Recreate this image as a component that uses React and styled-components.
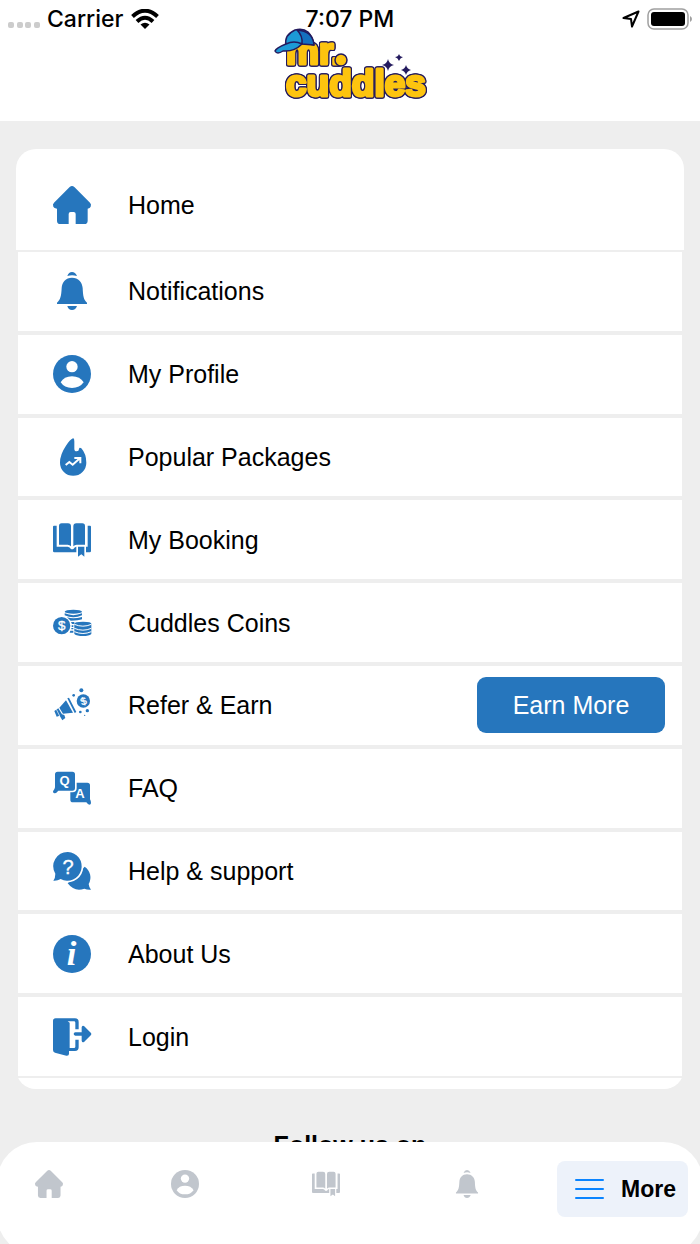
import React from 'react';
import styled, { createGlobalStyle } from 'styled-components';

const BLUE = '#2676bd';
const GREY = '#eeeeee';

const GlobalStyle = createGlobalStyle`
  * {
    box-sizing: border-box;
  }

  body {
    margin: 0;
    background: ${GREY};
    color: #000;
    font-family: 'Liberation Sans', Arial, sans-serif;
    font-size: 25px;
    line-height: 28px;
  }
`;

const Page = styled.div`
  min-height: 100vh;
`;

const Header = styled.header`
  background: white;
  padding-bottom: 19px;
`;

const StatusBar = styled.div`
  display: grid;
  grid-template-columns: 1fr auto 1fr;
  align-items: center;
  padding: 10px 8px 0;
  font-family: Inter, sans-serif;
  font-size: 23px;
  font-weight: 500;
  line-height: 18px;
`;

const StatusGroup = styled.div`
  display: flex;
  align-items: center;
  justify-content: ${props => (props.$end ? 'flex-end' : 'flex-start')};
  gap: 7px;
  height: 18px;
`;

const LogoLink = styled.a`
  display: block;
  width: 152px;
  height: 74px;
  margin: 0 auto;

  svg {
    display: block;
    overflow: visible;
  }
`;

const LogoText = styled.text`
  font-family: 'Liberation Sans', Arial, sans-serif;
  font-weight: bold;
  fill: #fdc40f;
  stroke: #fdc40f;
  stroke-width: 3px;
  stroke-linejoin: round;
  filter: drop-shadow(1px 0 0 #231a5e) drop-shadow(-1px 0 0 #231a5e) drop-shadow(0 1px 0 #231a5e)
    drop-shadow(0 -1px 0 #231a5e);
`;

const Content = styled.main`
  padding: 28px 16px 0;
`;

const Card = styled.nav`
  background: white;
  border-radius: 20px;
  padding: 11px 0;
`;

const HomeRow = styled.div`
  display: flex;
  height: 90px;
  padding: 0 2px;
`;

const MenuList = styled.ul`
  display: grid;
  grid-auto-rows: 1fr;
  min-height: 828px;
  margin: 0;
  padding: 0;
  list-style: none;
`;

const MenuRow = styled.li`
  display: flex;
  align-items: center;
  border: 2px solid ${GREY};
`;

const MenuLink = styled.a`
  flex: 1;
  align-self: stretch;
  display: flex;
  align-items: center;
  gap: 37px;
  padding-left: 35px;
  color: inherit;
  text-decoration: none;
`;

const EarnButton = styled.button`
  width: 188px;
  height: 56px;
  margin-right: 17px;
  border: 0;
  border-radius: 9px;
  background: ${BLUE};
  color: white;
  font: inherit;
  cursor: pointer;
`;

const FollowTitle = styled.h2`
  margin: 42px 0 0;
  font-size: 25px;
  line-height: 28px;
  font-weight: bold;
  text-align: center;
`;

const TabBar = styled.nav`
  position: fixed;
  left: -3px;
  right: -3px;
  bottom: -11px;
  display: flex;
  align-items: flex-start;
  gap: 76px;
  height: 113px;
  padding: 19px 15px 0 38px;
  border-radius: 40px;
  background: white;
`;

const Tabs = styled.div`
  flex: 1;
  display: grid;
  grid-template-columns: 136fr 141fr 141fr 28px;
  padding-top: 9px;
`;

const Tab = styled.a`
  display: flex;
  width: 28px;
  color: #c1c6cd;
`;

const MoreTab = styled.a`
  display: flex;
  align-items: center;
  justify-content: space-between;
  width: 131px;
  height: 56px;
  padding: 0 12px 0 18px;
  border-radius: 8px;
  background: #edf2fa;
  color: #000;
  font-size: 23px;
  font-weight: bold;
  text-decoration: none;
`;

const IconSvg = styled.svg`
  flex: none;
  display: block;
  overflow: visible;
  fill: currentColor;
  color: ${props => props.$color || 'inherit'};
`;

const IconLetter = styled.text`
  fill: white;
  font-family: ${props => (props.$serif ? "'Liberation Serif', serif" : "'Liberation Sans', sans-serif")};
  font-style: ${props => (props.$serif ? 'italic' : 'normal')};
  font-weight: ${props => (props.$light ? 'normal' : 'bold')};
  stroke: white;
  stroke-width: ${props => (props.$light ? '1px' : '0')};
  text-anchor: middle;
`;

const Icon = ({ size = 38, color, children }) => (
  <IconSvg width={size} height={size} viewBox="0 0 114 114" $color={color} aria-hidden="true">
    {children}
  </IconSvg>
);

const HomeIcon = props => (
  <Icon {...props}>
    <path d="M50 3Q57-3 64 3L111 50Q116 55 113 62Q111 67 104 68V104Q104 114 94 114H68V84Q68 78 62 78H53Q47 78 47 84V114H22Q12 114 12 104V68Q3 67 1 62Q-2 55 3 50Z" />
  </Icon>
);

const BellIcon = props => (
  <Icon {...props}>
    <path d="M43 12Q47 0 57 0T72 12Q57 7 43 12Z" />
    <path d="M57 17C76 17 88 30 89 48C90 72 92 84 102 92V96H12V92C22 84 25 72 26 48C27 30 38 17 57 17Z" />
    <path d="M43 102H72Q68 114 57 114T43 102Z" />
  </Icon>
);

const ProfileIcon = props => (
  <Icon {...props}>
    <circle cx="57" cy="57" r="57" />
    <circle cx="57" cy="35" r="17" fill="white" />
    <path d="M23 82Q33 64 57 64T92 82Q80 99 57 99T23 82Z" fill="white" />
  </Icon>
);

const FlameIcon = props => (
  <Icon {...props}>
    <path d="M60 1Q64 0 64 10V32Q64 40 71 40T78 33Q79 26 85 31Q100 48 100 74A39 39 0 0 1 21 74Q21 50 38 25Q51 4 60 1Z" />
    <path d="M38 81L49 72L59 80L79 62M64 60H82V76" fill="none" stroke="white" strokeWidth="6" />
  </Icon>
);

const BookIcon = props => (
  <Icon {...props}>
    <path d="M18 15Q18 7 26 7H45Q54 7 54 16V76Q50 71 44 71H18ZM96 15Q96 7 88 7H70Q61 7 61 16V76Q65 71 71 71H96Z" />
    <path d="M3 14H11V77H44Q51 78 53 83Q57 87 62 83Q64 78 70 77V94H4Q0 94 0 90V17Q0 14 3 14Z" />
    <path d="M104 14H111Q114 14 114 17V90Q114 94 110 94H99V77H104Z" />
    <path d="M75 77H94V107L85 100L75 107Z" />
  </Icon>
);

const CoinsIcon = props => (
  <Icon {...props}>
    <ellipse cx="61" cy="23" rx="26" ry="6" />
    <path d="M35 28Q61 39 87 28V34Q61 46 35 34ZM42 40Q61 46 87 39V46Q77 50 53 50ZM54 54H64V60H57Z" />
    <circle cx="26" cy="65" r="26" />
    <path d="M56 64H61V69H56ZM55 72H61V76H55ZM52 80H61V86H50Z" />
    <path d="M64 59Q64 53 90 53T115 59V90Q108 96 90 96T64 90Z" />
    <path d="M64 61Q90 72 115 61M64 73Q90 84 115 73M64 83Q90 94 115 83" fill="none" stroke="white" strokeWidth="3" />
    <IconLetter x="26" y="79" fontSize="40" $light>$</IconLetter>
  </Icon>
);

const MegaphoneIcon = props => (
  <Icon {...props}>
    <path d="M43 37L48 35L70 78L65 81Z" />
    <path d="M39 43L60 80L30 83L19 65Z" />
    <path d="M16 67L27 85L34 87L37 96L28 103L20 89L11 92L4 75Z" />
    <path d="M10 70L20 90" stroke="white" strokeWidth="2" />
    <circle cx="91" cy="45" r="20" />
    <circle cx="85" cy="13" r="6" />
    <circle cx="62" cy="28" r="4" />
    <circle cx="82" cy="78" r="4" />
    <circle cx="103" cy="74" r="5" />
    <circle cx="95" cy="88" r="2" />
    <IconLetter x="91" y="56" fontSize="31" transform="rotate(-20 91 45)" $light>$</IconLetter>
  </Icon>
);

const FaqIcon = props => (
  <Icon {...props}>
    <path d="M60 41H103Q111 41 111 49V91Q114 96 114 102Q114 107 109 107Q105 107 100 100H60Q52 100 52 92V49Q52 41 60 41Z" />
    <path
      d="M14 8H58Q66 8 66 16V57Q66 65 58 65H16Q10 73 4 73Q0 73 0 67Q5 62 6 55V16Q6 8 14 8Z"
      stroke="white"
      strokeWidth="10"
      paintOrder="stroke"
    />
    <IconLetter x="35" y="49" fontSize="39">Q</IconLetter>
    <IconLetter x="81" y="87" fontSize="39">A</IconLetter>
  </Icon>
);

const HelpIcon = props => (
  <Icon {...props}>
    <path d="M95 44A39 39 0 0 1 107 96Q108 106 114 113Q103 114 94 110Q65 121 44 94Z" />
    <path
      d="M45 0A43 43 0 1 1 23 81Q13 87 1 86Q7 79 7 65A43 43 0 0 1 45 0Z"
      stroke="white"
      strokeWidth="10"
      paintOrder="stroke"
    />
    <IconLetter x="45" y="66" fontSize="60" $light>?</IconLetter>
  </Icon>
);

const InfoIcon = props => (
  <Icon {...props}>
    <circle cx="57" cy="57" r="57" />
    <IconLetter x="56" y="91" fontSize="104" $serif>i</IconLetter>
  </Icon>
);

const LoginIcon = props => (
  <Icon {...props}>
    <path d="M8 1H66Q77 1 77 12V34H67V14Q67 10 63 10H44L50 14V90H63Q67 90 67 86V65H77V88Q77 99 66 99H48V107Q48 114 40 113L6 104Q0 102 0 96V9Q0 1 8 1Z" />
    <path d="M67 43H86V28Q87 21 93 24L114 45Q116 48 114 51L93 72Q87 75 86 68V53H67Q62 52 62 48T67 43Z" />
  </Icon>
);

const menuItems = [
  { label: 'Notifications', icon: BellIcon },
  { label: 'My Profile', icon: ProfileIcon },
  { label: 'Popular Packages', icon: FlameIcon },
  { label: 'My Booking', icon: BookIcon },
  { label: 'Cuddles Coins', icon: CoinsIcon },
  { label: 'Refer & Earn', icon: MegaphoneIcon, action: 'Earn More' },
  { label: 'FAQ', icon: FaqIcon },
  { label: 'Help & support', icon: HelpIcon },
  { label: 'About Us', icon: InfoIcon },
  { label: 'Login', icon: LoginIcon }
];

const tabs = [
  { label: 'Home', icon: HomeIcon },
  { label: 'Profile', icon: ProfileIcon },
  { label: 'Bookings', icon: BookIcon },
  { label: 'Notifications', icon: BellIcon }
];

const Logo = () => (
  <svg width="152" height="74" viewBox="0 0 152 74" role="img" aria-label="mr. cuddles">
    <LogoText fontSize="37">
      <tspan x="12" y="36">mr.</tspan>
      <tspan x="12" y="68">cuddles</tspan>
    </LogoText>
    <circle cx="67" cy="32" r="6" fill="#fdc40f" stroke="#231a5e" strokeWidth="1.500" />
    <g stroke="#231a5e" strokeWidth="1.500" strokeLinejoin="round">
      <path d="M12 17Q10 7 21 2Q29 0 34 4Q39 9 40 17Q29 14 12 17Z" fill="#1c9ad6" />
      <path d="M23 2Q29 8 28 16L40 17Q39 3 23 2Z" fill="#1470bf" />
      <path d="M12 16Q20 12 28 16Q20 24 9 23Q3 27 1 23Q2 20 12 16Z" fill="#1c9ad6" />
    </g>
    <path
      d="M114 31Q115 36 120 37Q115 38 114 43Q113 38 108 37Q113 36 114 31ZM125 26Q126 29 129 29Q126 30 125 33Q124 30 121 29Q124 29 125 26ZM132 37Q133 41 137 42Q133 43 132 47Q131 43 127 42Q131 41 132 37Z"
      fill="#231a5e"
    />
  </svg>
);

const SignalDots = () => (
  <svg width="32" height="18" viewBox="0 0 32 18" fill="#cccccc" aria-hidden="true">
    {[0, 9, 17, 26].map(x => (
      <rect key={x} x={x} y="12" width="6" height="6" rx="2" />
    ))}
  </svg>
);

const WifiIcon = () => (
  <svg width="28" height="20" viewBox="0 0 28 20" aria-hidden="true">
    <path d="M1.500 7.500Q14-4 26.500 7.500M6 12.500Q14 5 22 12.500" fill="none" stroke="black" strokeWidth="4" />
    <path d="M9.500 15.500Q14 12 18.500 15.500L14 20Z" />
  </svg>
);

const LocationIcon = () => (
  <svg width="18" height="18" viewBox="0 0 18 18" aria-hidden="true">
    <path d="M16.500 1.500L1.500 8L9 9L10 16.500Z" fill="none" stroke="black" strokeWidth="2" strokeLinejoin="round" />
  </svg>
);

const BatteryIcon = () => (
  <svg width="45" height="22" viewBox="0 0 45 22" aria-hidden="true">
    <rect x="1" y="1" width="40" height="20" rx="6" fill="none" stroke="#a0a0a0" strokeWidth="1.500" />
    <rect x="4" y="4" width="34" height="14" rx="3" />
    <path d="M43 8Q45 9 45 11T43 14Z" fill="#a0a0a0" />
  </svg>
);

const MenuLines = () => (
  <svg width="29" height="22" viewBox="0 0 29 22" aria-hidden="true">
    <path d="M1 2H28M1 11H28M1 20H28" stroke="#0a84ff" strokeWidth="2" strokeLinecap="round" />
  </svg>
);

const App = () => {
  return (
    <>
      <GlobalStyle />
      <Page>
        <Header>
          <StatusBar>
            <StatusGroup>
              <SignalDots />
              <span>Carrier</span>
              <WifiIcon />
            </StatusGroup>
            <span>7:07 PM</span>
            <StatusGroup $end>
              <LocationIcon />
              <BatteryIcon />
            </StatusGroup>
          </StatusBar>
          <LogoLink href="#home" aria-label="mr. cuddles">
            <Logo />
          </LogoLink>
        </Header>

        <Content>
          <Card aria-label="Menu">
            <HomeRow>
              <MenuLink href="#home">
                <HomeIcon color={BLUE} />
                Home
              </MenuLink>
            </HomeRow>
            <MenuList>
              {menuItems.map(({ label, icon: ItemIcon, action }) => (
                <MenuRow key={label}>
                  <MenuLink href="#menu">
                    <ItemIcon color={BLUE} />
                    {label}
                  </MenuLink>
                  {action && <EarnButton type="button">{action}</EarnButton>}
                </MenuRow>
              ))}
            </MenuList>
          </Card>
          <FollowTitle>Follow us on</FollowTitle>
        </Content>

        <TabBar aria-label="Tabs">
          <Tabs>
            {tabs.map(({ label, icon: TabIcon }) => (
              <Tab key={label} href="#tab" aria-label={label}>
                <TabIcon size={28} />
              </Tab>
            ))}
          </Tabs>
          <MoreTab href="#more" aria-current="page">
            <MenuLines />
            More
          </MoreTab>
        </TabBar>
      </Page>
    </>
  );
};

export default App;
